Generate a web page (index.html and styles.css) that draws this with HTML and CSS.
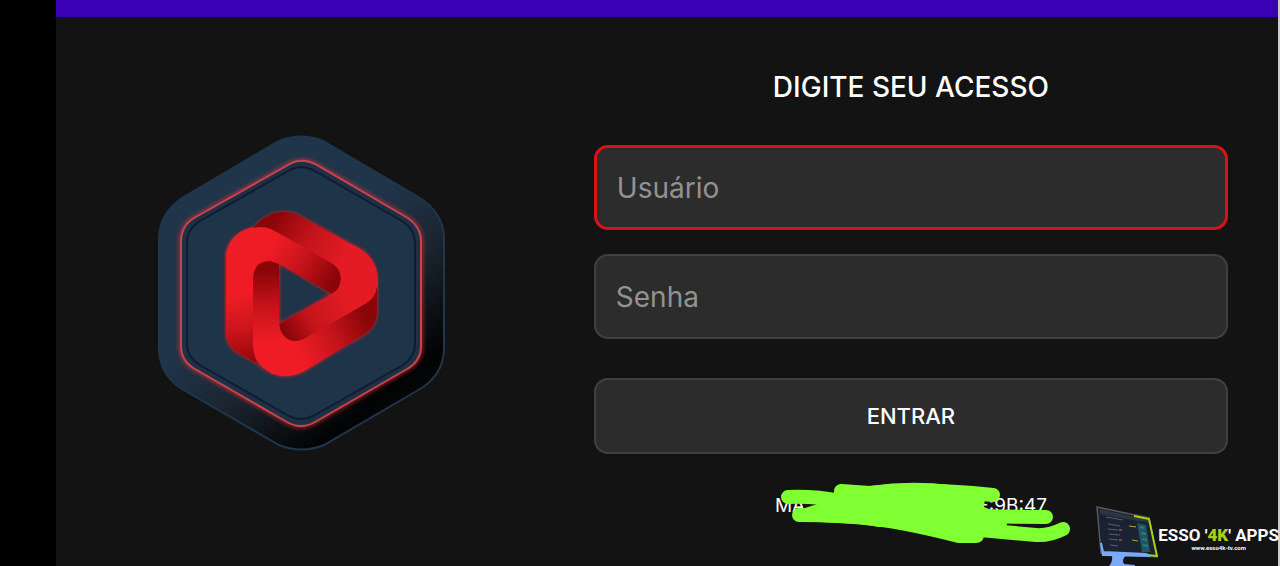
FILE: index.html
```html
<!DOCTYPE html>
<html lang="pt-BR">
<head>
    <meta charset="UTF-8">
    <meta name="viewport" content="width=device-width, initial-scale=1.0">
    <title>ESSO 4K APPS</title>
    <link rel="stylesheet" href="styles.css">
</head>
<body>
    <div class="status-bar"></div>

    <main class="login">
        <section class="brand">
            <svg class="logo" viewBox="0 0 320 340" role="img" aria-label="Logo">
                <defs>
                    <linearGradient id="rim" gradientUnits="userSpaceOnUse" x1="90" y1="60" x2="270" y2="290">
                        <stop offset="0.35" stop-color="#1f354a"/>
                        <stop offset="0.6" stop-color="#1b2530"/>
                        <stop offset="0.9" stop-color="#020304"/>
                        <stop offset="1" stop-color="#07090b"/>
                    </linearGradient>
                    <linearGradient id="topEnd" gradientUnits="userSpaceOnUse" x1="130" y1="125" x2="192" y2="161">
                        <stop offset="0" stop-color="#f01c25"/>
                        <stop offset="0.45" stop-color="#cc151c"/>
                        <stop offset="1" stop-color="#8b0508"/>
                    </linearGradient>
                    <linearGradient id="topLeg" gradientUnits="userSpaceOnUse" x1="90" y1="175" x2="104" y2="242">
                        <stop offset="0" stop-color="#f01c25"/>
                        <stop offset="0.5" stop-color="#cc151c"/>
                        <stop offset="1" stop-color="#980609"/>
                    </linearGradient>
                    <linearGradient id="rightEnd" gradientUnits="userSpaceOnUse" x1="134" y1="98" x2="205" y2="139">
                        <stop offset="0" stop-color="#8b0508"/>
                        <stop offset="0.5" stop-color="#c4141b"/>
                        <stop offset="1" stop-color="#e41b24"/>
                    </linearGradient>
                    <linearGradient id="rightLeg" gradientUnits="userSpaceOnUse" x1="144" y1="208" x2="205" y2="172">
                        <stop offset="0" stop-color="#8b0508"/>
                        <stop offset="0.4" stop-color="#c6141b"/>
                        <stop offset="1" stop-color="#e41b24"/>
                    </linearGradient>
                    <linearGradient id="bottomEnd" gradientUnits="userSpaceOnUse" x1="160" y1="236" x2="226" y2="198">
                        <stop offset="0" stop-color="#f01c25"/>
                        <stop offset="0.5" stop-color="#c6141b"/>
                        <stop offset="1" stop-color="#8b0508"/>
                    </linearGradient>
                    <linearGradient id="bottomLeg" gradientUnits="userSpaceOnUse" x1="125" y1="150" x2="125" y2="222">
                        <stop offset="0" stop-color="#8b0508"/>
                        <stop offset="0.5" stop-color="#c6141b"/>
                        <stop offset="1" stop-color="#f01c25"/>
                    </linearGradient>
                    <filter id="glow" x="-20%" y="-20%" width="140%" height="140%">
                        <feGaussianBlur stdDeviation="2"/>
                    </filter>
                </defs>

                <!-- outer plate -->
                <path d="M139 20 Q161 11 183 20 L280 77 Q303 92 304 116 V229 Q303 254 280 268 L184 324 Q161 333 139 324 L42 268 Q20 254 19 229 V116 Q20 92 42 77 Z" fill="url(#rim)" stroke="#20364b" stroke-width="2"/>

                <!-- neon line -->
                <path d="M148 44 Q161 36 175 43 L266 96 Q281 105 281 121 V225 Q281 240 267 248 L175 301 Q161 309 147 301 L55 248 Q41 240 41 225 V121 Q41 105 54 97 Z" fill="none" stroke="#ff3038" stroke-width="4" filter="url(#glow)" opacity="0.6"/>
                <path d="M148 44 Q161 36 175 43 L266 96 Q281 105 281 121 V225 Q281 240 267 248 L175 301 Q161 309 147 301 L55 248 Q41 240 41 225 V121 Q41 105 54 97 Z" fill="#1e3144" stroke="#c8434c" stroke-width="2"/>
                <path d="M150 49 Q161 43 173 49 L262 100 Q275 108 275 123 V223 Q275 236 263 244 L173 295 Q161 301 149 295 L60 244 Q47 236 47 223 V122 Q47 108 60 100 Z" fill="#1e3448" stroke="#111b35" stroke-width="2"/>

                <!-- red mark: three folded bands -->
                <path d="M113 107 Q135 84 158 94 L222 129 Q237 140 237 161 V192 Q236 205 225 213 L166 249 C148 260 130 254 118 243 L100 233 Q86 225 86 212 V134 Q88 113 113 107 Z M139 142 V203 L192 173 Z" fill="#ff2029" fill-rule="evenodd" filter="url(#glow)" opacity="0.8"/>
                <path d="M86 212 V136 C87 113 112 99 133 109 L190 141 Q201 147 201 157 Q201 168 192 173 L139 143 L130 140 Q113 140 113 157 V225 Q114 236 118 243 L100 233 Q86 225 86 212 Z" fill="url(#topEnd)"/>
                <path d="M86 165 H113 V225 Q114 236 118 243 L100 233 Q86 225 86 212 Z" fill="url(#topLeg)"/>
                <path d="M113 107 Q133 84 158 94 L222 129 Q238 140 238 160 Q238 176 225 183 L164 218 C152 224 140 217 139 203 L192 173 Q201 168 201 157 Q201 147 190 141 L133 109 Q124 104 113 107 Z" fill="url(#rightEnd)"/>
                <path d="M192 173 Q201 168 201 157 L238 160 Q238 176 225 183 L164 218 C152 224 140 217 139 203 Z" fill="url(#rightLeg)"/>
                <path d="M113 157 Q114 140 130 140 L139 143 V203 C140 217 152 224 164 218 L225 183 Q236 177 237 165 V192 Q236 205 225 213 L166 249 C140 265 113 248 113 222 Z" fill="url(#bottomEnd)"/>
                <path d="M113 157 Q114 140 130 140 L139 143 V203 Q140 213 147 218 L145 225 H113 Z" fill="url(#bottomLeg)"/>
            </svg>
        </section>

        <form class="access">
            <h1>DIGITE SEU ACESSO</h1>
            <input class="field active" type="text" placeholder="Usuário" aria-label="Usuário">
            <input class="field" type="password" placeholder="Senha" aria-label="Senha">
            <button class="enter" type="button">ENTRAR</button>
            <div class="mac">
                <span>MA</span>
                <span>E:9B:47</span>
                <svg class="scribble" viewBox="0 0 320 96" aria-hidden="true">
                    <g fill="none" stroke="#80ff32" stroke-width="14" stroke-linecap="round" stroke-linejoin="round">
                        <path d="M28 27 Q56 26 80 31"/>
                        <path d="M39 45 Q90 45 120 50"/>
                        <path d="M81 21 L110 23 Q160 17 233 25"/>
                        <path d="M200 46 L286 47"/>
                        <path d="M220 60 L276 65 Q289 66 303 59"/>
                    </g>
                    <path d="M74 22 L110 16 Q150 10 190 15 L226 20 L224 37 L246 46 L248 66 L224 66 Q223 73 216 73 H198 Q140 58 98 54 L38 51 L45 38 L70 30 Z" fill="#80ff32"/>
                </svg>
            </div>
        </form>
    </main>

    <a class="promo" href="#">
        <svg class="monitor" viewBox="0 0 62 60" aria-hidden="true">
            <path d="M1 1 L53 12 L61 51 L5 47 Z" fill="#1b2231" stroke="#55585e" stroke-width="1.5"/>
            <path d="M4 3 L52 14 L53 17 L4 8 Z" fill="#2c3541"/>
            <path d="M41 17 L50 19 L54 46 L46 46 Z" fill="#1d5563"/>
            <path d="M44 21 l4 1 M45 27 l5 1 M46 33 l5 1 M47 39 l5 1" stroke="#2f7f78" stroke-width="2"/>
            <path d="M10 11 l17 3 M12 18 l12 2 M12 23 l10 1 M13 28 l11 1 M13 33 l9 1 M14 39 l8 1" stroke="#566073" stroke-width="1"/>
            <path d="M23 24 l3 0 M23 34 l3 0" stroke="#a84c66" stroke-width="1.5"/>
            <path d="M33 20 l7 1 M36 34 l6 1" stroke="#b0a052" stroke-width="1"/>
            <path d="M38 10 L53 13 L61 50 L50 49" fill="none" stroke="#a8cf17" stroke-width="2"/>
            <path d="M5 37 L7 46 L50 48 L54 50 L7 49 Z" fill="#78aaf7" stroke="#78aaf7" stroke-width="2"/>
            <path d="M16 49 H30 Q25 55 28 58 L39 59 V60 H13 Q17 56 16 49 Z" fill="#78aaf7"/>
        </svg>
        <span class="promo-text">
            <span class="promo-name">ESSO '<b>4K</b>' APPS</span>
            <span class="promo-url">www.esso4k-tv.com</span>
        </span>
    </a>
</body>
</html>
```
FILE: styles.css
```css
* {
    margin: 0;
    padding: 0;
    box-sizing: border-box;
    font-family: 'Inter', sans-serif;
}

body {
    background-color: #131313;
    min-height: 100vh;
    border-left: 56px solid #000;
    border-right: 2px solid #ccc;
    overflow: hidden;
}

.status-bar {
    height: 17px;
    background-color: #3a00b3;
}

.login {
    display: grid;
    grid-template-columns: 10fr 13fr;
    column-gap: 50px;
    padding-right: 50px;
}

.brand {
    display: flex;
    justify-content: center;
    padding-top: 104px;
}

.logo {
    width: 320px;
    height: 340px;
}

.access {
    display: flex;
    flex-direction: column;
    padding-top: 52px;
}

h1 {
    color: #fff;
    font-size: 28px;
    font-weight: 500;
    line-height: 36px;
    text-align: center;
    margin-bottom: 40px;
}

.field {
    height: 85px;
    padding: 0 20px;
    margin-bottom: 24px;
    background-color: #2c2c2c;
    border: 2px solid #404040;
    border-radius: 14px;
    color: #fff;
    font-size: 28px;
    outline: none;
}

.field::placeholder {
    color: #929292;
}

.field.active {
    border: 3px solid #d81216;
}

.enter {
    height: 76px;
    margin-top: 15px;
    background-color: #2c2c2c;
    border: 2px solid #404040;
    border-radius: 14px;
    color: #fff;
    font-size: 22px;
    font-weight: 500;
    cursor: pointer;
}

.mac {
    position: relative;
    display: flex;
    justify-content: space-between;
    align-self: center;
    width: 272px;
    margin-top: 40px;
    color: #fff;
    font-size: 19px;
    line-height: 24px;
}

.scribble {
    position: absolute;
    left: -15px;
    top: -24px;
    width: 320px;
    height: 96px;
}

/* promo badge over the bottom corner */
.promo {
    position: absolute;
    right: 0;
    bottom: 0;
    display: flex;
    align-items: center;
    color: #fff;
    text-decoration: none;
}

.monitor {
    width: 62px;
    height: 60px;
}

.promo-text {
    display: flex;
    flex-direction: column;
    align-items: center;
    padding: 5px 1px 0 0;
}

.promo-name {
    font-family: 'Roboto', sans-serif;
    font-size: 17px;
    font-weight: 700;
    line-height: 18px;
}

.promo-name b {
    font-family: 'Roboto', sans-serif;
    color: #a8cf17;
}

.promo-url {
    font-family: 'Roboto', sans-serif;
    font-size: 6px;
    font-weight: 700;
    line-height: 8px;
}
```
